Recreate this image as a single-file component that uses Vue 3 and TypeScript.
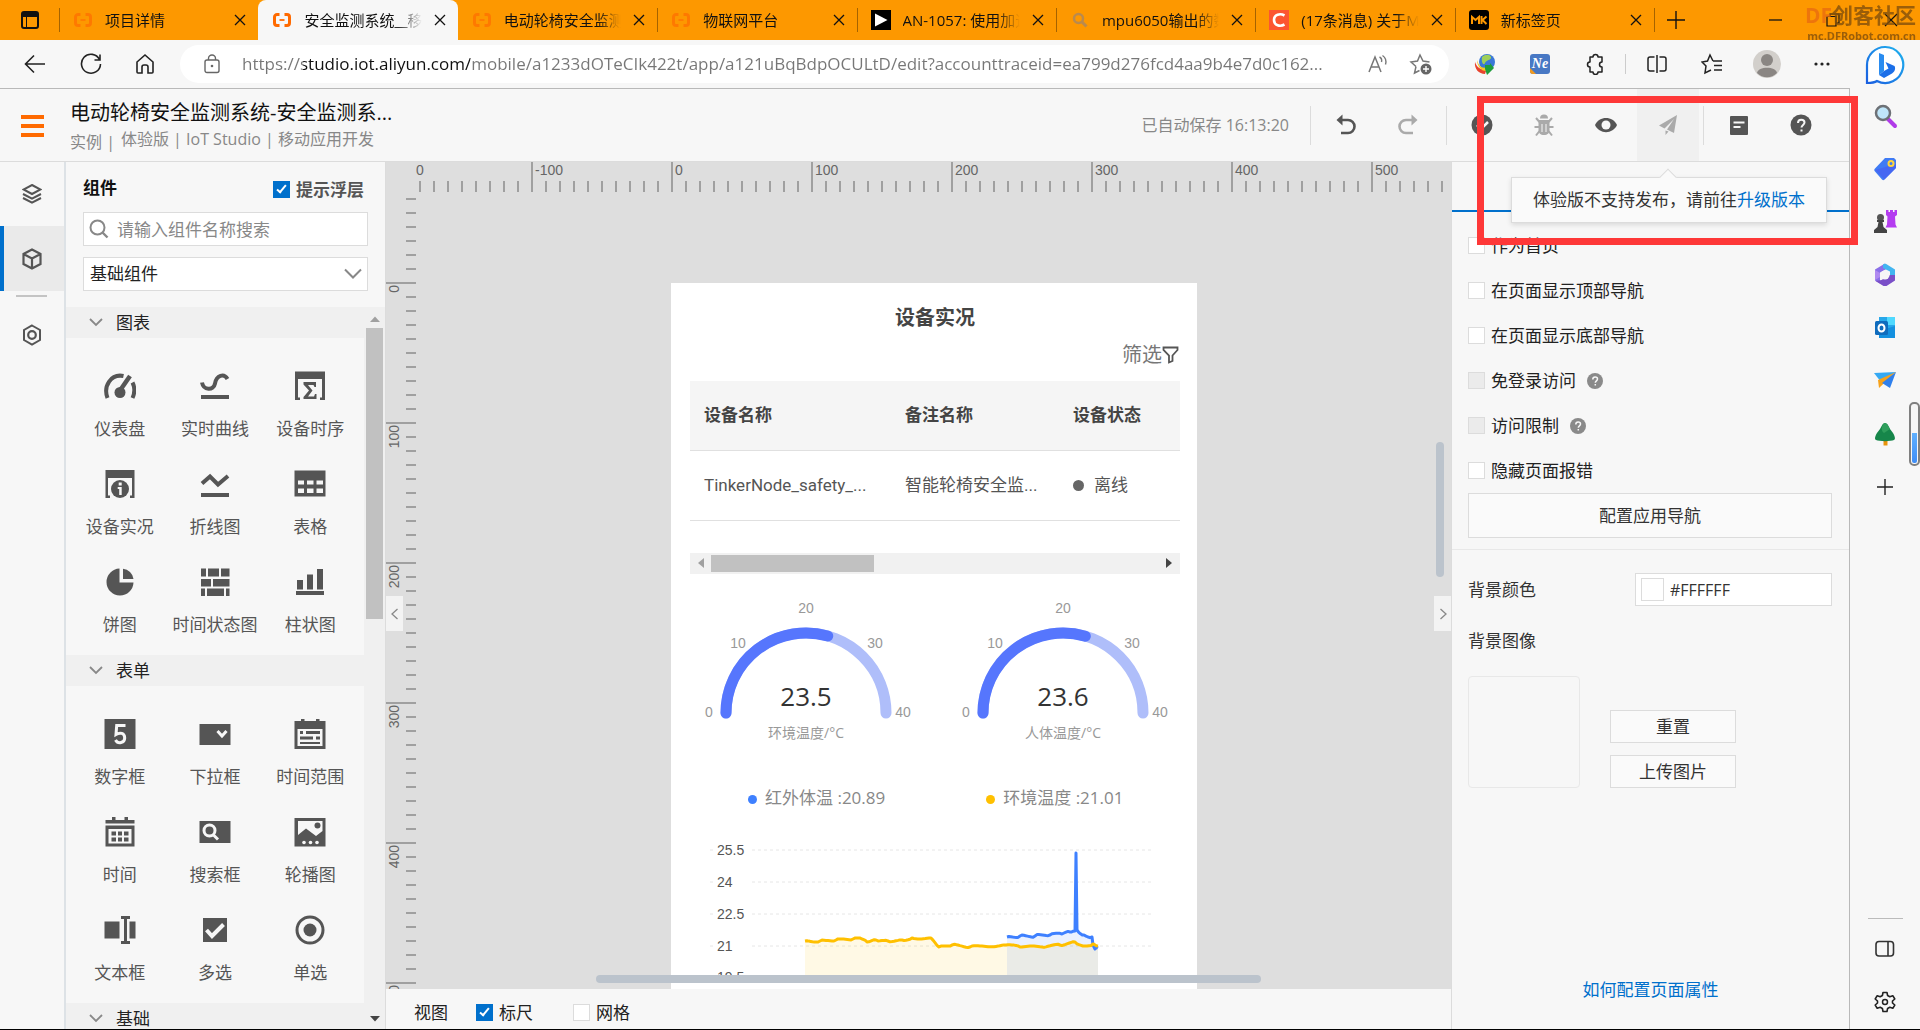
<script setup lang="ts">
import { ref } from 'vue'

interface Tab { title: string; icon: string; active?: boolean }
const tabs: Tab[] = [
  { title: '项目详情', icon: 'ali' },
  { title: '安全监测系统__移动应用', icon: 'ali', active: true },
  { title: '电动轮椅安全监测系统', icon: 'ali' },
  { title: '物联网平台', icon: 'ali' },
  { title: 'AN-1057: 使用加速度计', icon: 'play' },
  { title: 'mpu6050输出的数据', icon: 'find' },
  { title: '(17条消息) 关于MPU6050', icon: 'csdn' },
  { title: '新标签页', icon: 'mk' },
]

const favicons: Record<string, string> = {
  ali: '<path d="M7.500 4.500H5a2.500 2.500 0 0 0-2.500 2.500v6A2.500 2.500 0 0 0 5 15.500h2.500M12.500 4.500H15a2.500 2.500 0 0 1 2.500 2.500v6a2.500 2.500 0 0 1-2.500 2.500h-2.500" fill="none" stroke="#ff6a00" stroke-width="3"/><path d="M7.500 10h5" stroke="#ff6a00" stroke-width="1.800"/>',
  play: '<rect width="20" height="20" fill="#000"/><path d="M4 3.500v13L16.500 10z" fill="#fff"/>',
  find: '<circle cx="8.500" cy="8.500" r="4.500" fill="none" stroke="#b98a4e" stroke-width="2.500"/><path d="M12 12l4.500 4.500" stroke="#b98a4e" stroke-width="3"/>',
  csdn: '<rect width="20" height="20" fill="#fc5531"/><path d="M15.500 5.500C11 3 5 4.500 5 10s6 7 10.500 4.500" fill="none" stroke="#fff" stroke-width="2.600"/>',
  mk: '<rect width="20" height="20" rx="3" fill="#000"/><path d="M3 14V7l3.500 3L10 7v7M12.500 6v8M17.500 6.500l-4 3.500 4 4" fill="none" stroke="#fd9800" stroke-width="2"/>',
}

const url = 'https://studio.iot.aliyun.com/mobile/a1233dOTeCIk422t/app/a121uBqBdpOCULtD/edit?accounttraceid=ea799d276fcd4aa9b4e7d0c162...'

const keyword = ref('')
const library = ref('基础组件')
const tipLayer = ref(true)
const showRuler = ref(true)
const showGrid = ref(false)
const bgColor = ref('#FFFFFF')

interface Widget { name: string; icon: string }
const groups: { name: string; items: Widget[] }[] = [
  {
    name: '图表',
    items: [
      { name: '仪表盘', icon: '<path d="M3.500 28C-1 16 7 3.500 19.500 6M28.500 12.500c2.500 5 2.500 10 0 15.500" fill="none" stroke="#555" stroke-width="4"/><path d="M26 6L17 19" stroke="#555" stroke-width="4.500"/><circle cx="16" cy="22.500" r="5.500"/>' },
      { name: '实时曲线', icon: '<path d="M3 12.500c1.500 8 11.500 8.500 13 1C17.500 5 25 3 28.500 9" fill="none" stroke="#555" stroke-width="4"/><path d="M2 25h28v4H2z"/>' },
      { name: '设备时序', icon: '<path d="M1 1.500h30V30h-5v-2.500h2V9H4v18.500h2V30H1z"/><path d="M9.500 12H22v5h-1.500l-1-2H14l4.500 5.500-4.500 6h6l1-2.500h1.500V29h-13v-2l5.500-6.500-5.500-6z"/>' },
      { name: '设备实况', icon: '<path d="M1.500 2h29v28H26v-2.500h2V10H4v17.500h2V30H1.500z"/><circle cx="16" cy="21" r="9"/><path d="M14.700 14.500h3v3h-3zM13.700 19h4v8h-2.500v-6h-1.500z" fill="#f7f7f7"/>' },
      { name: '折线图', icon: '<path d="M3 15.500L11 8.500 19 16.500 29 8" fill="none" stroke="#555" stroke-width="4"/><path d="M2 25h28v4H2z"/>' },
      { name: '表格', icon: '<path d="M.500 2.500h31v26h-31z"/><path d="M4 12.500h6v4H4zM13 12.500h6.500v4H13zM22.500 12.500H29v4h-6.500zM4 20.500h6V25H4zM13 20.500h6.500V25H13zM22.500 20.500H29V25h-6.500z" fill="#f7f7f7"/>' },
      { name: '饼图', icon: '<path d="M15.500 2.500v14h14a13.500 13.500 0 1 1-14-14z"/><path d="M19 2.700a12 12 0 0 1 10.500 10.300H19z"/>' },
      { name: '时间状态图', icon: '<path d="M2 2.500h5v8H2zM9 2.500h11v8H9zM22 2.500h8.500v8H22zM2 13h10v7.500H2zM14 13h16.500v7.500H14zM2 22.500h4V30H2zM8 22.500h17V30H8zM27 22.500h3.500V30H27z"/>' },
      { name: '柱状图', icon: '<path d="M2 25h28v4H2zM3 14h6v9.500H3zM13 8.500h6v15h-6zM23 3h6v20.500h-6z"/>' },
    ],
  },
  {
    name: '表单',
    items: [
      { name: '数字框', icon: '<path d="M.500 1h31v30h-31z"/><path d="M21.500 7.500H12.700l-.7 9c4-2.500 8.700-1.500 8.700 3.500 0 5-6.700 6.500-9.200 2" fill="none" stroke="#f7f7f7" stroke-width="3"/>' },
      { name: '下拉框', icon: '<path d="M.500 6h31v21h-31z"/><path d="M18.500 13l4.500 5 4.500-5" fill="none" stroke="#f7f7f7" stroke-width="3"/>' },
      { name: '时间范围', icon: '<path d="M.500 3H7V1h3.500v2H22V1h3.500v2h6v28H.500zM3.500 11v17h25V11z" fill-rule="evenodd"/><path d="M6 13h3v3H6zM12 13h14v3H12zM6 18.500h13v3H6zM22 18.500h4v3h-4zM6 24h20v2H6z"/>' },
      { name: '时间', icon: '<path d="M1.500 4H8V1h3.500v3h9V1H24v3h6.500v3.500h-29zM1.500 9.500h29v21h-29zM4.500 13v14.500h23V13z" fill-rule="evenodd"/><path d="M7.500 15.500h4.500v4H7.500zM14 15.500h4v4h-4zM20 15.500h4.500v4H20zM7.500 21.500h4.500v4H7.500zM14 21.500h4v4h-4zM20 21.500h4.500v4H20z"/>' },
      { name: '搜索框', icon: '<path d="M.500 5h31v22h-31z"/><circle cx="10.500" cy="14.500" r="5.500" fill="none" stroke="#f7f7f7" stroke-width="3"/><path d="M14 18.500l5 5" stroke="#f7f7f7" stroke-width="3"/>' },
      { name: '轮播图', icon: '<path d="M.500 2h31v28.500h-31zM4 5v14l8-6.500L22 20l6.500-5V5z" fill-rule="evenodd"/><circle cx="23.500" cy="9.500" r="3"/><g fill="#f7f7f7"><circle cx="10" cy="26.500" r="1.800"/><circle cx="16.500" cy="26.500" r="1.800"/><circle cx="23" cy="26.500" r="1.800"/></g>' },
      { name: '文本框', icon: '<path d="M.500 7.500h15v17H.500zM25.500 7.500h6v17h-6zM17 2h9v3h-3v22h3v3h-9v-3h3V5h-3z"/>' },
      { name: '多选', icon: '<path d="M4 4h24v24H4z"/><path d="M7.500 16l5.500 6L24.500 10.500" fill="none" stroke="#f7f7f7" stroke-width="4"/>' },
      { name: '单选', icon: '<circle cx="16" cy="16" r="13" fill="none" stroke="#555" stroke-width="3"/><circle cx="16" cy="16" r="6.500"/>' },
    ],
  },
]

// The rulers draw one mark per 10 units; 10 units are 14px on screen.
interface Mark { pos: number; major: boolean; label: string }
function marks(zero: number, from: number, to: number): Mark[] {
  const list: Mark[] = []
  for (let v = from; v <= to; v += 10) {
    list.push({ pos: zero + v * 1.4, major: v % 100 === 0, label: String(v) })
  }
  return list
}
const hMarks = marks(256, -180, 550)
const vMarks = marks(91, -60, 560)

const gauges = [
  { value: 23.5, name: '环境温度/°C' },
  { value: 23.6, name: '人体温度/°C' },
]
const scale = [
  { t: 0, x: 12, y: 122 }, { t: 10, x: 41, y: 53 }, { t: 20, x: 109, y: 18 },
  { t: 30, x: 178, y: 53 }, { t: 40, x: 206, y: 122 },
]
function arc(v: number): string {
  const a = Math.PI * (1 - v / 40)
  return `M29 118A80 80 0 0 1 ${109 + 80 * Math.cos(a)} ${118 - 80 * Math.sin(a)}`
}

const axis = [
  { t: '25.5', y: 20 }, { t: '24', y: 52 }, { t: '22.5', y: 84 }, { t: '21', y: 116 }, { t: '19.5', y: 147 },
]
// Sensor readings jitter slightly around the sampled key points.
function line(points: number[][], noise: number): string {
  let d = `M${points[0][0]} ${points[0][1]}`
  for (let i = 1; i < points.length; i++) {
    const [x0, y0] = points[i - 1]
    const [x1, y1] = points[i]
    const steps = Math.max(1, Math.round((x1 - x0) / 2))
    for (let s = 1; s <= steps; s++) {
      const k = s / steps
      const n = s === steps ? 0 : Math.sin((i * 17 + s) * 12.9) * noise
      d += `L${(x0 + (x1 - x0) * k).toFixed(1)} ${(y0 + (y1 - y0) * k + n).toFixed(1)}`
    }
  }
  return d
}
const yellow = line([[115, 111], [130, 111], [146, 110], [163, 109], [172, 109], [177, 112], [186, 110], [198, 111], [212, 110], [222, 108], [241, 108], [249, 117], [262, 115], [280, 117], [316, 115], [330, 117], [352, 117], [370, 115], [385, 112], [395, 116], [403, 114], [408, 116]], 1)
const blue = line([[317, 107], [330, 106], [345, 106], [360, 105], [372, 104], [380, 102], [385, 101], [386, 23], [387, 100], [394, 105], [402, 107], [403, 115], [405, 119], [408, 118]], 1.3)

const pageOptions = ref([
  { text: '作为首页', on: false },
  { text: '在页面显示顶部导航', on: false },
  { text: '在页面显示底部导航', on: false },
  { text: '免登录访问', on: false, disabled: true },
  { text: '访问限制', on: false, disabled: true },
  { text: '隐藏页面报错', on: false },
])

const apps = [
  { name: '搜索', icon: '<path d="M16 16l7 7" stroke="#b03be8" stroke-width="4" stroke-linecap="round"/><circle cx="11" cy="10" r="7" fill="#bfe6fa" stroke="#6d7176" stroke-width="2.500"/>' },
  { name: '购物', icon: '<path d="M13 2h9l2 2v8L12.500 23.500c-1 1-1.500 1-2.500 0L3 15.500c-1-1-1-2 0-3z" fill="#3f7bf5"/><path d="M3 14l9.500 9.500L24 12V8z" fill="#4b53f0" opacity=".5"/><circle cx="19" cy="7.500" r="2.500" fill="#3f7bf5" stroke="#ffd43b" stroke-width="2"/>' },
  { name: '游戏', icon: '<path d="M14 1h2.500v2H18V1h3v2h1.500V1H25v5l-2 1.500.5 8 1.500 3H13.500l1.500-3 .5-8L14 6z" fill="#b43cf0"/><circle cx="8.500" cy="8.500" r="3.500" fill="#555"/><path d="M5 11h7v2h-1.500l1 5 3.500 3v3H2v-3l3.500-3 1-5H5z" fill="#444"/>' },
  { name: 'Microsoft 365', icon: '<path d="M13 1.500L3 7.500v11L8 21.500V10.500l9-5z" fill="#8a6fe8"/><path d="M11 2.500c1-1 3-1 4 0L23 7.500V16l-5-3V9.500L11 6z" fill="#42b5f0"/><path d="M23 13v5.500l-8.500 5.500h-3L3.500 19l6-1L18 13z" fill="#7a4fc8"/><path d="M3 8v10l5-3V11z" fill="#b08af0"/><circle cx="13" cy="13" r="4.500" fill="#f7f7f7"/>' },
  { name: 'Outlook', icon: '<path d="M7 2h16v18H7z" fill="#28a8ea"/><path d="M15 2h8v8h-8z" fill="#50d9ff"/><path d="M7 23V16l16-5v12z" fill="#1490df"/><rect x="3" y="6" width="13" height="14" rx="1.500" fill="#0f6cbd"/><ellipse cx="9.500" cy="13" rx="3" ry="3.500" fill="none" stroke="#fff" stroke-width="2"/>' },
  { name: '投递', icon: '<path d="M2 5l22-1L9 14z" fill="#35a9f3"/><path d="M24 4L7 20l-1-8z" fill="#f7a21b"/><path d="M24 4l-6 16-8-5z" fill="#2f80ed"/>' },
  { name: '公益', icon: '<path d="M11.500 18h4v6.500h-4z" fill="#e8940c"/><path d="M13 2c2 0 3 2 5 6 5 6 6 10 4 11-3 1.500-15 1.500-18 0-2-1-1-5 4-11 2-4 3-6 5-6z" fill="#16864a"/><path d="M13 2c2 0 3 2 5 6l-6 4C8 10 10 2 13 2z" fill="#2f9e5c"/>' },
]
</script>

<template>
  <div class="browser">
    <header class="tabbar">
      <button class="workspace" aria-label="标签页操作">
        <svg width="20" height="20" viewBox="0 0 20 20"><rect x="2" y="2" width="16" height="16" rx="2" fill="none" stroke="#111" stroke-width="2" /><path d="M2 3h16v4H2z" fill="#111" /><path d="M6.500 7v11" stroke="#111" /></svg>
      </button>
      <nav class="tabs">
        <div v-for="t in tabs" :key="t.title" class="tab" :class="{ active: t.active }">
          <svg class="favicon" :class="{ dim: t.icon === 'ali' && !t.active }" width="20" height="20" viewBox="0 0 20 20" v-html="favicons[t.icon]"></svg>
          <span class="tab-title">{{ t.title }}</span>
          <button class="tab-close" aria-label="关闭标签页">
            <svg width="12" height="12" viewBox="0 0 12 12"><path d="M1 1l10 10M11 1L1 11" stroke="#111" stroke-width="1.300" /></svg>
          </button>
        </div>
      </nav>
      <div class="window-side">
        <button class="new-tab" aria-label="新建标签页"><svg width="18" height="18" viewBox="0 0 18 18"><path d="M9 0v18M0 9h18" stroke="#111" stroke-width="1.400" /></svg></button>
        <span class="grow"></span>
        <button class="win" aria-label="最小化"><svg width="14" height="14" viewBox="0 0 14 14"><path d="M1 7h13" stroke="#111" stroke-width="1.300" /></svg></button>
        <button class="win" aria-label="还原"><svg width="14" height="14" viewBox="0 0 14 14"><path d="M1 3.500h9V13H1zM4 3.500V1h9v9h-3" fill="none" stroke="#111" stroke-width="1.200" /></svg></button>
        <button class="win" aria-label="关闭"><svg width="14" height="14" viewBox="0 0 14 14"><path d="M1 1l12 12M13 1L1 13" stroke="#111" stroke-width="1.200" /></svg></button>
      </div>
      <div class="watermark"><b><i>DF</i>创客社区</b><span>mc.DFRobot.com.cn</span></div>
    </header>

    <div class="window">
      <div class="viewport">
        <div class="toolbar">
          <div class="nav-buttons">
            <button aria-label="后退"><svg width="22" height="22" viewBox="0 0 22 22"><path d="M21 11H2M10 2.500L1.500 11l8.500 8.500" fill="none" stroke="#222" stroke-width="1.600" /></svg></button>
            <button aria-label="刷新"><svg width="22" height="22" viewBox="0 0 22 22"><path d="M19.500 6.500A9.500 9.500 0 1 0 20.500 11M20 1.500V7h-5.500" fill="none" stroke="#222" stroke-width="1.600" /></svg></button>
            <button aria-label="主页"><svg width="20" height="22" viewBox="0 0 20 22"><path d="M2 9l8-7 8 7v10a1 1 0 0 1-1 1h-4v-6a2 2 0 0 0-2-2H9a2 2 0 0 0-2 2v6H3a1 1 0 0 1-1-1z" fill="none" stroke="#222" stroke-width="1.600" /></svg></button>
          </div>
          <label class="address">
            <svg width="16" height="20" viewBox="0 0 16 20"><rect x="1" y="6" width="14" height="12.500" rx="2" fill="none" stroke="#666" stroke-width="1.400" /><path d="M4.500 6V4.500a3.500 3.500 0 0 1 7 0V6" fill="none" stroke="#666" stroke-width="1.400" /><circle cx="8" cy="12" r="1.300" fill="#666" /></svg>
            <input class="url" type="text" :value="url" aria-label="地址" readonly />
            <svg width="22" height="20" viewBox="0 0 22 20"><path d="M2 18L8 3l6 15M4 13h8" fill="none" stroke="#777" stroke-width="1.500" /><path d="M12.500 3c2 1 2.500 3 2 5M15.500 1.500c3 2 4 5.500 3 9" fill="none" stroke="#777" stroke-width="1.400" /></svg>
            <svg width="24" height="22" viewBox="0 0 24 22"><path d="M7 13.500L2 9l6.500-1L11 2l3 6 6.500 1M7 13.500L5.500 20l5-2.500" fill="none" stroke="#777" stroke-width="1.500" /><circle cx="17" cy="16" r="5.500" fill="#666" /><path d="M17 13v6M14 16h6" stroke="#fff" stroke-width="1.400" /></svg>
          </label>
          <div class="extensions">
            <button aria-label="下载扩展"><svg width="22" height="22" viewBox="0 0 22 22"><circle cx="13" cy="9" r="8" fill="#3a78d8" /><path d="M8 4c3-3 8-3 9 0s-5 3-6 6-4 0-3-6z" fill="#9fd05a" /><path d="M1 9c2 6 7 9 12 6l-2 6C5 21 0 16 1 9z" fill="#e8432e" /><path d="M3 7c2 7 6 9 10 7l-1 4C7 18 3 13 3 7z" fill="#f6c624" /><path d="M11 12h5v-2l4 5-7 7-2-6z" fill="#1f9d3c" /></svg></button>
            <button aria-label="Ne"><svg width="20" height="20" viewBox="0 0 20 20"><rect width="20" height="20" rx="3" fill="#4878c4" /><path d="M0 14l6 6H3a3 3 0 0 1-3-3z" fill="#f29a1f" /><text x="10" y="14" text-anchor="middle" font-family="Liberation Serif, serif" font-style="italic" font-weight="bold" font-size="14" fill="#fff">Ne</text></svg></button>
            <button aria-label="扩展"><svg width="22" height="22" viewBox="0 0 22 22"><path d="M6 4h3a2.500 2.500 0 0 1 5 0h4v5a2.500 2.500 0 0 0 0 5v5h-4a2.500 2.500 0 0 1-5 0H6v-5a2.500 2.500 0 0 1 0-5z" fill="none" stroke="#222" stroke-width="1.500" stroke-linejoin="round" /></svg></button>
            <span class="tool-sep"></span>
            <button aria-label="分屏"><svg width="22" height="20" viewBox="0 0 22 20"><path d="M8.500 3H4a2 2 0 0 0-2 2v10a2 2 0 0 0 2 2h4.500M13.500 3H18a2 2 0 0 1 2 2v10a2 2 0 0 1-2 2h-4.500M11 1v18" fill="none" stroke="#222" stroke-width="1.500" /></svg></button>
            <button aria-label="收藏夹"><svg width="22" height="22" viewBox="0 0 22 22"><path d="M12 8l-3-6-2.500 6L1 9l4 4-1 7 6-3M12 8h9M13 12.500h8M13 17h8" fill="none" stroke="#222" stroke-width="1.500" /></svg></button>
            <button aria-label="个人资料"><svg width="28" height="28" viewBox="0 0 28 28"><circle cx="14" cy="14" r="14" fill="#d2cfcb" /><circle cx="14" cy="10" r="6" fill="#8a8683" /><path d="M4 23c1-7 19-7 20 0a14 14 0 0 1-20 0z" fill="#8a8683" /></svg></button>
            <button aria-label="更多"><svg width="18" height="6" viewBox="0 0 18 6"><g fill="#222"><circle cx="3" cy="3" r="1.600" /><circle cx="9" cy="3" r="1.600" /><circle cx="15" cy="3" r="1.600" /></g></svg></button>
          </div>
        </div>

        <main class="studio">
          <header class="app-head">
            <button class="menu" aria-label="菜单"><i></i><i></i><i></i></button>
            <div class="heading">
              <h1>电动轮椅安全监测系统-安全监测系...</h1>
              <p><span>实例 |</span><span class="edition">体验版 | IoT Studio | 移动应用开发</span></p>
            </div>
            <span class="saved">已自动保存 16:13:20</span>
            <span class="head-sep"></span>
            <button class="act" aria-label="撤销"><svg width="24" height="24" viewBox="0 0 24 24"><path d="M7 7h7a6 6 0 0 1 0 13H7" fill="none" stroke="#555" stroke-width="2.600" /><path d="M8.500 1.500v11L2.500 7z" fill="#555" /></svg></button>
            <button class="act" aria-label="重做"><svg width="24" height="24" viewBox="0 0 24 24"><path d="M17 7h-7a6 6 0 0 0 0 13h7" fill="none" stroke="#aaa" stroke-width="2.600" /><path d="M15.500 1.500v11l6-5.500z" fill="#aaa" /></svg></button>
            <span class="head-sep"></span>
            <button class="act" aria-label="校验"><svg width="24" height="24" viewBox="0 0 24 24"><circle cx="12" cy="12" r="10.500" fill="#555" /><path d="M7 12l4 4 7-7" fill="none" stroke="#f7f7f7" stroke-width="2.500" /></svg></button>
            <button class="act" aria-label="调试"><svg width="24" height="24" viewBox="0 0 24 24"><path d="M8 5.500a4 4 0 0 1 8 0zM6.500 7h11v10c0 3.500-2 5-5.500 5s-5.500-1.500-5.500-5z" fill="#aaa" /><path d="M10 11v8M14 11v8" stroke="#f7f7f7" stroke-width="1" /><path d="M4 5l3.500 4M20 5l-3.500 4M2.500 14H7M21.500 14H17M4 22.500L7.500 18M20 22.500L16.500 18" stroke="#aaa" stroke-width="2" /></svg></button>
            <button class="act" aria-label="预览"><svg width="24" height="24" viewBox="0 0 24 24"><path d="M1 12C5 2.500 19 2.500 23 12 19 21.500 5 21.500 1 12z" fill="#555" /><circle cx="12" cy="12" r="4.500" fill="#f7f7f7" /></svg></button>
            <button class="act publish" aria-label="发布"><svg width="24" height="24" viewBox="0 0 24 24"><path d="M21 2L3 12.500l5.500 3L18 6l-7 10.500 7 3.500zM9.500 17.500V22l3-3.500z" fill="#aaa" /></svg></button>
            <span class="head-sep"></span>
            <button class="act" aria-label="文档"><svg width="24" height="24" viewBox="0 0 24 24"><rect x="3" y="3" width="18" height="19" rx="1" fill="#555" /><path d="M6.500 9.500h11M6.500 14h7" stroke="#f7f7f7" stroke-width="1.800" /></svg></button>
            <button class="act" aria-label="帮助"><svg width="24" height="24" viewBox="0 0 24 24"><circle cx="12" cy="12" r="10.500" fill="#555" /><path d="M9 10c0-4.500 6.500-4 6.500-.5 0 2.300-3 2.500-3 5M12.500 16.500v2" fill="none" stroke="#f7f7f7" stroke-width="2" /></svg></button>
          </header>

          <div class="workbench">
            <nav class="side-nav">
              <button aria-label="页面"><svg width="20" height="20" viewBox="0 0 20 20"><path d="M10 1l8.500 4.500L10 10 1.500 5.500zM1 10l9 4.700 9-4.700M1 14l9 4.700 9-4.700" fill="none" stroke="#555" stroke-width="2" /></svg></button>
              <button class="current" aria-label="组件"><svg width="20" height="22" viewBox="0 0 20 22"><path d="M10 1.500l8.500 4.500v10L10 20.500 1.500 16V6zM1.500 6L10 10.500 18.500 6M10 10.500v10" fill="none" stroke="#555" stroke-width="2.200" /></svg></button>
              <hr />
              <button class="setting" aria-label="设置"><svg width="20" height="22" viewBox="0 0 20 22"><path d="M10 1.500l8 4.500v10l-8 4.500L2 16V6z" fill="none" stroke="#555" stroke-width="2" /><circle cx="10" cy="11" r="3.800" fill="none" stroke="#555" stroke-width="2.200" /></svg></button>
            </nav>

            <aside class="library">
              <div class="library-top">
                <h2>组件</h2>
                <label class="check strong"><input v-model="tipLayer" type="checkbox" /><span>提示浮层</span></label>
              </div>
              <label class="search">
                <svg width="20" height="20" viewBox="0 0 20 20"><circle cx="8.500" cy="8.500" r="7" fill="none" stroke="#888" stroke-width="2" /><path d="M13.500 13.500l5 5" stroke="#888" stroke-width="2.400" /></svg>
                <input v-model="keyword" type="text" placeholder="请输入组件名称搜索" aria-label="请输入组件名称搜索" />
              </label>
              <div class="picker">
                <select v-model="library" aria-label="组件库"><option>基础组件</option></select>
                <svg width="18" height="12" viewBox="0 0 18 12"><path d="M1 1.500l8 8 8-8" fill="none" stroke="#888" stroke-width="2" /></svg>
              </div>
              <div class="catalog">
                <div class="catalog-list">
                  <section v-for="g in groups" :key="g.name">
                    <h3><svg width="14" height="9" viewBox="0 0 14 9"><path d="M1 1l6 6 6-6" fill="none" stroke="#888" stroke-width="1.800" /></svg>{{ g.name }}</h3>
                    <div class="widgets">
                      <button v-for="w in g.items" :key="w.name" class="widget">
                        <svg width="32" height="32" viewBox="0 0 32 32" fill="#555" v-html="w.icon"></svg>
                        <span>{{ w.name }}</span>
                      </button>
                    </div>
                  </section>
                  <h3><svg width="14" height="9" viewBox="0 0 14 9"><path d="M1 1l6 6 6-6" fill="none" stroke="#888" stroke-width="1.800" /></svg>基础</h3>
                </div>
                <div class="catalog-scroll">
                  <svg width="10" height="6" viewBox="0 0 10 6"><path d="M0 6l5-5.500L10 6z" fill="#a0a0a0" /></svg>
                  <i></i>
                  <svg width="10" height="6" viewBox="0 0 10 6"><path d="M0 0l5 5.500L10 0z" fill="#444" /></svg>
                </div>
              </div>
            </aside>

            <section class="editor">
              <div class="board">
                <span class="corner"></span>
                <svg class="ruler-h">
                  <text x="0" y="13" text-anchor="start">0</text>
                  <g v-for="m in hMarks" :key="m.pos">
                    <rect :x="m.pos - 1" :y="m.major ? 0 : 19" width="2" :height="m.major ? 30 : 11" />
                    <text v-if="m.major" :x="m.pos + 3" y="13">{{ m.label }}</text>
                  </g>
                </svg>
                <svg class="ruler-v">
                  <g v-for="m in vMarks" :key="m.pos">
                    <rect :y="m.pos - 1" :x="m.major ? 0 : 20" height="2" :width="m.major ? 30 : 10" />
                    <text v-if="m.major" text-anchor="end" :transform="`translate(13 ${m.pos + 2}) rotate(-90)`">{{ m.label }}</text>
                  </g>
                </svg>
                <div class="stage">
                  <article class="phone">
                    <h4>设备实况</h4>
                    <button class="filter">筛选<svg width="17" height="18" viewBox="0 0 17 18"><path d="M1.500 1.500h14V4L10.500 9.500V15l-3.500 1.500v-7L1.500 4z" fill="none" stroke="#555" stroke-width="1.800" /></svg></button>
                    <table>
                      <thead><tr><th>设备名称</th><th>备注名称</th><th>设备状态</th></tr></thead>
                      <tbody><tr><td>TinkerNode_safety_...</td><td>智能轮椅安全监...</td><td><i class="off"></i>离线</td></tr></tbody>
                    </table>
                    <div class="table-scroll">
                      <svg width="6" height="10" viewBox="0 0 6 10"><path d="M6 0v10L0 5z" fill="#a0a0a0" /></svg>
                      <i></i>
                      <svg width="6" height="10" viewBox="0 0 6 10"><path d="M0 0v10l6-5z" fill="#444" /></svg>
                    </div>
                    <div class="gauges">
                      <svg v-for="g in gauges" :key="g.name" width="218" height="160" viewBox="0 0 218 160">
                        <path :d="arc(40)" class="arc-rest" />
                        <path :d="arc(g.value)" class="arc-value" />
                        <text v-for="s in scale" :key="s.t" :x="s.x" :y="s.y" class="gauge-tick">{{ s.t }}</text>
                        <text x="109" y="111" class="gauge-num">{{ g.value }}</text>
                        <text x="109" y="143" class="gauge-name">{{ g.name }}</text>
                      </svg>
                    </div>
                    <div class="legend">
                      <span><i class="b"></i>红外体温 :20.89</span>
                      <span><i class="y"></i>环境温度 :21.01</span>
                    </div>
                    <svg class="chart" width="490" height="149" viewBox="0 0 490 149">
                      <g v-for="a in axis" :key="a.t">
                        <path :d="`M20 ${a.y}H462`" stroke="#e6e6e6" stroke-width="1" stroke-dasharray="3 3" />
                        <rect x="26" :y="a.y - 6" width="34" height="12" fill="#fff" />
                        <text x="27" :y="a.y + 5">{{ a.t }}</text>
                      </g>
                      <path :d="`${yellow}V149H115z`" fill="#ffc000" opacity=".1" />
                      <path :d="`${blue}V149H317z`" fill="#3e80ff" opacity=".11" />
                      <path :d="blue" fill="none" stroke="#3e80ff" stroke-width="3" stroke-linejoin="round" />
                      <path :d="yellow" fill="none" stroke="#ffc000" stroke-width="3" stroke-linejoin="round" />
                    </svg>
                  </article>
                </div>
                <i class="bar-v"></i>
                <i class="bar-h"></i>
                <button class="fold fold-left" aria-label="收起左侧"><svg width="8" height="12" viewBox="0 0 8 12"><path d="M6.500 1L1 6l5.500 5" fill="none" stroke="#888" stroke-width="1.300" /></svg></button>
                <button class="fold fold-right" aria-label="收起右侧"><svg width="8" height="12" viewBox="0 0 8 12"><path d="M1.500 1L7 6l-5.500 5" fill="none" stroke="#888" stroke-width="1.300" /></svg></button>
              </div>
              <footer class="view-bar">
                <span>视图</span>
                <label class="check"><input v-model="showRuler" type="checkbox" /><span>标尺</span></label>
                <label class="check grid-check"><input v-model="showGrid" type="checkbox" /><span>网格</span></label>
              </footer>
            </section>

            <aside class="props">
              <div class="props-tab"></div>
              <div class="props-body">
                <div v-for="o in pageOptions" :key="o.text" class="option">
                  <label class="check"><input v-model="o.on" type="checkbox" :disabled="o.disabled" /><span>{{ o.text }}</span></label>
                  <svg v-if="o.disabled" width="16" height="16" viewBox="0 0 16 16"><circle cx="8" cy="8" r="8" fill="#8a8a8a" /><path d="M5.800 6.500c0-3.400 4.700-3 4.700-.4 0 1.700-2.200 1.800-2.200 3.600M8.300 11v1.600" fill="none" stroke="#f7f7f7" stroke-width="1.500" /></svg>
                </div>
                <button class="plain wide">配置应用导航</button>
              </div>
              <div class="props-body background">
                <div class="field">
                  <label for="bg-color">背景颜色</label>
                  <div class="color"><i></i><input id="bg-color" v-model="bgColor" type="text" /></div>
                </div>
                <p class="field-name">背景图像</p>
                <div class="image-field">
                  <div class="thumb"></div>
                  <div class="image-actions">
                    <button class="plain">重置</button>
                    <button class="plain">上传图片</button>
                  </div>
                </div>
              </div>
              <a class="help" href="#">如何配置页面属性</a>
            </aside>
          </div>
          <div class="tip">体验版不支持发布，请前往<a href="#">升级版本</a></div>
          <div class="highlight"></div>
        </main>
      </div>

      <aside class="edge-bar">
        <button aria-label="Bing" class="bing"><svg width="40" height="40" viewBox="0 0 40 40"><defs><linearGradient id="bing-ring" x1="0" y1="1" x2="1" y2="0"><stop offset="0" stop-color="#1a5fe0" /><stop offset="1" stop-color="#1fb2ee" /></linearGradient></defs><path d="M20 2a18 18 0 1 1-8 34c-3 2-6 2-10 2V20A18 18 0 0 1 20 2z" fill="#fff" stroke="url(#bing-ring)" stroke-width="2.200" /><path d="M14 8l5 2v16l-5 4z" fill="#2a8cf0" /><path d="M14 30l5-4 4.500-2.500-3-6.500 9 4c1.500 3 0 6-2.500 7.500L19 33z" fill="#1c6fe8" /></svg></button>
        <button v-for="a in apps" :key="a.name" :aria-label="a.name"><svg width="26" height="26" viewBox="0 0 26 26" v-html="a.icon"></svg></button>
        <button aria-label="添加"><svg width="16" height="16" viewBox="0 0 16 16"><path d="M8 0v16M0 8h16" stroke="#222" stroke-width="1.400" /></svg></button>
        <span class="grow"></span>
        <hr />
        <button aria-label="边栏"><svg width="20" height="18" viewBox="0 0 20 18"><rect x="1" y="1.500" width="17.500" height="14.500" rx="3" fill="none" stroke="#333" stroke-width="1.600" /><path d="M13 1.500V16" stroke="#333" stroke-width="1.600" /></svg></button>
        <button aria-label="设置"><svg width="22" height="22" viewBox="0 0 22 22"><path d="M9 1.500h4l.6 3 2.200 1.200 3-1 2 3.300L18.500 10v2l2.300 2-2 3.300-3-1-2.200 1.200-.6 3H9l-.6-3-2.200-1.200-3 1-2-3.300L3.500 12v-2L1.200 8l2-3.300 3 1 2.200-1.200z" fill="none" stroke="#222" stroke-width="1.600" stroke-linejoin="round" /><circle cx="11" cy="11" r="2.500" fill="none" stroke="#222" stroke-width="1.500" /></svg></button>
        <i class="level"></i>
      </aside>
    </div>
  </div>
</template>

<style>
body {
  margin: 0;
  overflow: hidden;
}
</style>

<style scoped>
.browser {
  display: flex;
  flex-direction: column;
  height: 100vh;
  box-sizing: border-box;
  overflow: hidden;
  border-bottom: 1px solid #000;
  background: #f7f7f7;
  color: #333;
  font: 17px/24px "Open Sans", "Noto Sans CJK SC", sans-serif;
}
.browser *,
.browser *::before {
  box-sizing: border-box;
}
button {
  padding: 0;
  border: 0;
  background: none;
  color: inherit;
  font: inherit;
}
svg {
  flex: none;
  display: block;
}
h1, h2, h3, h4, p {
  margin: 0;
  font-weight: 400;
}
a {
  color: #0070cc;
  text-decoration: none;
}
.grow {
  flex: 1;
}

/* tab strip */
.tabbar {
  position: relative;
  display: flex;
  flex: none;
  height: 40px;
  background: #fd9800;
  color: #111;
  font-size: 15px;
}
.workspace {
  display: flex;
  flex: none;
  align-items: center;
  width: 59px;
  padding-left: 20px;
}
.tabs {
  display: flex;
  flex: 1;
  min-width: 0;
}
.tab {
  position: relative;
  display: flex;
  flex: 1;
  align-items: center;
  min-width: 0;
  padding: 0 12px 0 14px;
}
.tab::before {
  content: "";
  position: absolute;
  left: 0;
  top: 8px;
  width: 1px;
  height: 24px;
  background: #a56300;
}
.tab.active {
  border-radius: 8px 8px 0 0;
  background: #f7f7f7;
}
.tab.active::before,
.tab.active + .tab::before {
  display: none;
}
.favicon.dim {
  opacity: 0.65;
}
.tab-title {
  flex: 1;
  overflow: hidden;
  margin: 0 12px;
  white-space: nowrap;
  -webkit-mask-image: linear-gradient(90deg, #000 80%, transparent);
  mask-image: linear-gradient(90deg, #000 80%, transparent);
}
.window-side {
  position: relative;
  display: flex;
  flex: none;
  align-items: center;
  width: 266px;
}
.window-side::before {
  content: "";
  width: 1px;
  height: 24px;
  background: #a56300;
}
.new-tab {
  padding-left: 12px;
}
.win {
  display: flex;
  justify-content: center;
  width: 58px;
}
.watermark {
  position: absolute;
  top: 3px;
  right: 4px;
  display: flex;
  flex-direction: column;
  align-items: flex-end;
  color: #83500c;
  opacity: 0.8;
  pointer-events: none;
}
.watermark b {
  font-size: 21px;
}
.watermark i {
  color: #ea6d10;
  font-style: normal;
}
.watermark span {
  font-size: 11px;
  font-weight: 700;
  line-height: 18px;
}

/* browser frame */
.window {
  display: flex;
  flex: 1;
  min-height: 0;
}
.viewport {
  display: flex;
  flex: 1;
  flex-direction: column;
  min-width: 0;
}
.toolbar {
  display: flex;
  flex: none;
  align-items: center;
  height: 48px;
}
.nav-buttons {
  display: flex;
  justify-content: space-between;
  width: 131px;
  margin-left: 24px;
}
.address {
  display: flex;
  flex: 1;
  align-items: center;
  gap: 20px;
  height: 38px;
  margin-left: 25px;
  padding: 0 16px 0 24px;
  border-radius: 19px;
  background: #fff;
}
.url {
  flex: 1;
  min-width: 0;
  margin-left: 2px;
  padding: 0;
  border: 0;
  outline: 0;
  font: 17px/24px "Open Sans", sans-serif;
  color: transparent;
  background: linear-gradient(90deg, #767676 61px, #111 61px, #111 228px, #767676 228px);
  -webkit-background-clip: text;
  background-clip: text;
}
.extensions {
  display: flex;
  flex: none;
  align-items: center;
  margin: 0 1px 0 8px;
}
.extensions button {
  display: flex;
  justify-content: center;
  width: 55px;
}
.tool-sep {
  width: 1px;
  height: 20px;
  margin: 0 3px;
  background: #ccc;
}

/* studio header */
.studio {
  position: relative;
  display: flex;
  flex: 1;
  flex-direction: column;
  min-height: 0;
  border-top: 1px solid #b9b9b9;
  border-right: 1px solid #b9b9b9;
}
.app-head {
  display: flex;
  flex: none;
  align-items: center;
  height: 73px;
  padding-right: 17px;
  border-bottom: 1px solid #dcdcdc;
}
.menu {
  display: flex;
  flex-direction: column;
  gap: 4px;
  width: 23px;
  margin: 2px 26px 0 21px;
}
.menu i {
  height: 4px;
  background: #ff6a00;
}
.menu i + i {
  margin-top: 1px;
}
.heading {
  flex: 1;
  min-width: 0;
  padding-top: 2px;
  white-space: nowrap;
}
.heading h1 {
  color: #111;
  font-size: 20px;
  line-height: 28px;
}
.heading p {
  display: flex;
  gap: 6px;
  color: #888;
  font-size: 16px;
}
.heading p span:first-child {
  padding-top: 3px;
}
.saved {
  margin-right: 21px;
  color: #888;
  font-size: 16px;
}
.head-sep {
  width: 1px;
  height: 39px;
  background: #dcdcdc;
}
.act + .head-sep {
  margin-left: 7px;
}
.app-head .head-sep:last-of-type {
  margin: 0 4px;
}
.act {
  display: flex;
  align-items: center;
  justify-content: center;
  width: 62px;
  height: 72px;
}
.head-sep + .act {
  margin-left: 4px;
}
.publish {
  background: #f0f0f0;
}
.publish + .head-sep + .act {
  margin-left: 0;
}

/* left navigation */
.workbench {
  display: flex;
  flex: 1;
  min-height: 0;
}
.side-nav {
  display: flex;
  flex: none;
  flex-direction: column;
  width: 66px;
  border-right: 2px solid #dde2e6;
}
.side-nav button {
  display: flex;
  align-items: center;
  justify-content: center;
  height: 65px;
}
.side-nav button:first-child {
  height: 64px;
}
.side-nav .current {
  padding-right: 4px;
  border-left: 4px solid #0070cc;
  background: #eaeaea;
}
.side-nav hr {
  width: 31px;
  margin: 4px 16px 5px;
  border: 0;
  border-top: 2px solid #c4c4c4;
}

/* component library */
.library {
  display: flex;
  flex: none;
  flex-direction: column;
  width: 319px;
}
.library-top {
  display: flex;
  align-items: center;
  justify-content: space-between;
  height: 50px;
  padding: 2px 21px 0 17px;
}
.library-top h2 {
  color: #111;
  font-size: 17px;
  font-weight: 700;
}
.check {
  display: flex;
  align-items: center;
  gap: 6px;
  color: #222;
}
.check.strong {
  padding-top: 3px;
  color: #555;
  font-weight: 700;
}
.check input {
  position: relative;
  width: 17px;
  height: 17px;
  margin: 0;
  appearance: none;
  border: 1px solid #dcdcdc;
  background: #fff;
}
.check input:checked {
  border-color: #0070cc;
  background: #0070cc;
}
.check input:checked::before {
  content: "";
  position: absolute;
  left: 5px;
  top: 1px;
  width: 5px;
  height: 10px;
  border: solid #fff;
  border-width: 0 2px 2px 0;
  transform: rotate(40deg);
}
.check input:disabled {
  background: #ebebeb;
}
.search,
.picker {
  display: flex;
  align-items: center;
  height: 34px;
  margin: 0 17px 11px;
  border: 1px solid #dcdcdc;
  background: #fff;
}
.search {
  padding-left: 5px;
}
.search input {
  flex: 1;
  min-width: 0;
  margin-left: 8px;
  padding: 1px 0 0;
  border: 0;
  outline: 0;
  background: none;
  color: #333;
  font: inherit;
}
.search input::placeholder {
  color: #888;
}
.picker {
  padding: 0 5px 0 6px;
}
.picker select {
  flex: 1;
  padding: 0;
  border: 0;
  appearance: none;
  background: none;
  color: #222;
  font: inherit;
}
.catalog {
  display: flex;
  flex: 1;
  min-height: 0;
  margin-top: 5px;
}
.catalog-list {
  flex: 1;
  overflow: hidden;
}
.catalog h3 {
  display: flex;
  align-items: center;
  gap: 13px;
  height: 31px;
  padding-left: 23px;
  background: #f0f0f0;
  color: #222;
  font-size: 17px;
}
.widgets {
  display: grid;
  grid-template-columns: repeat(3, 1fr);
  grid-auto-rows: 98px;
  height: 317px;
  padding: 13px 6px 0;
}
.widget {
  display: flex;
  flex-direction: column;
  align-items: center;
  gap: 15px;
  padding-top: 19px;
  color: #555;
  white-space: nowrap;
}
.catalog-scroll {
  display: flex;
  flex-direction: column;
  align-items: center;
  justify-content: space-between;
  width: 21px;
  padding: 9px 0 7px;
  background: #f0f0f0;
}
.catalog-scroll i {
  width: 17px;
  height: 291px;
  margin: 6px 0 auto;
  background: #c1c1c1;
}

/* canvas */
.editor {
  display: flex;
  flex: 1;
  flex-direction: column;
  min-width: 0;
  border-left: 1px solid #dcdcdc;
}
.board {
  position: relative;
  display: grid;
  flex: 1;
  grid-template: 30px minmax(0, 1fr) / 30px minmax(0, 1fr);
  min-height: 0;
  background: #dedede;
}
.ruler-h,
.ruler-v {
  width: 100%;
  height: 100%;
  overflow: hidden;
  fill: #a0a0a0;
  font: 14px "Liberation Sans", sans-serif;
}
.ruler-h text,
.ruler-v text {
  fill: #666;
}
.stage {
  overflow: hidden;
  padding-left: 1px;
}
.phone {
  width: 526px;
  height: 100%;
  margin: 91px auto 0;
  padding: 0 17px 0 19px;
  background: #fff;
}
.phone h4 {
  padding-top: 21px;
  color: #444;
  font-size: 20px;
  font-weight: 700;
  line-height: 28px;
  text-align: center;
}
.filter {
  display: flex;
  align-items: center;
  margin: 10px 1px 0 auto;
  color: #777;
  font-size: 20px;
  line-height: 26px;
}
.phone table {
  width: 100%;
  margin-top: 13px;
  border-collapse: collapse;
  table-layout: fixed;
  color: #555;
  font-family: Roboto, "Noto Sans CJK SC", sans-serif;
}
.phone th,
.phone td {
  height: 70px;
  padding: 0 0 0 14px;
  border-bottom: 1px solid #e0e0e0;
  text-align: left;
  white-space: nowrap;
}
.phone th {
  width: 201px;
  height: 69px;
  background: #f5f5f5;
  color: #444;
  font-weight: 700;
}
.phone th:nth-child(2) {
  width: 168px;
}
.phone th:last-child {
  width: auto;
}
.off {
  display: inline-block;
  width: 11px;
  height: 11px;
  margin-right: 10px;
  border-radius: 50%;
  background: #666;
}
.table-scroll {
  display: flex;
  align-items: center;
  justify-content: space-between;
  height: 21px;
  margin-top: 32px;
  padding: 0 8px;
  background: #f1f1f1;
}
.table-scroll i {
  width: 163px;
  height: 17px;
  margin: 0 auto 0 7px;
  background: #c1c1c1;
}
.gauges {
  display: flex;
  gap: 39px;
  margin: 21px 7px 0;
}
.arc-rest,
.arc-value {
  fill: none;
  stroke: #afbefa;
  stroke-width: 11;
  stroke-linecap: round;
}
.arc-value {
  stroke: #5676fd;
}
.gauges text {
  text-anchor: middle;
  fill: #999;
}
.gauge-tick {
  font: 14px "Liberation Sans", sans-serif;
}
.gauges .gauge-num {
  fill: #333;
  font: 26px "Open Sans", sans-serif;
}
.gauge-name {
  font-size: 14px;
}
.legend {
  display: flex;
  gap: 101px;
  margin: 31px 0 0 58px;
  color: #888;
  white-space: nowrap;
}
.legend i {
  display: inline-block;
  width: 9px;
  height: 9px;
  margin-right: 8px;
  border-radius: 50%;
}
.legend .b {
  background: #3e80ff;
}
.legend .y {
  background: #ffc000;
}
.chart {
  margin-top: 20px;
}
.chart text {
  fill: #555;
  font: 14px "Liberation Sans", sans-serif;
}
.bar-v,
.bar-h {
  position: absolute;
  border-radius: 4px;
  background: #bbc3cc;
}
.bar-v {
  top: 280px;
  right: 7px;
  width: 8px;
  height: 135px;
}
.bar-h {
  left: 210px;
  bottom: 6px;
  width: 665px;
  height: 8px;
}
.fold {
  position: absolute;
  top: 434px;
  display: flex;
  align-items: center;
  justify-content: center;
  width: 17px;
  height: 35px;
  background: #f3f3f3;
}
.fold-left {
  left: 0;
}
.fold-right {
  right: 0;
}
.view-bar {
  display: flex;
  flex: none;
  align-items: center;
  height: 40px;
  padding: 7px 0 0 28px;
  color: #222;
}
.view-bar .check {
  margin-left: 28px;
}
.view-bar .grid-check {
  margin-left: 40px;
}

/* properties */
.props {
  display: flex;
  flex: none;
  flex-direction: column;
  width: 398px;
  border-left: 1px solid #dcdcdc;
}
.props-tab {
  flex: none;
  height: 50px;
  border-bottom: 2px solid #0070cc;
}
.props-body {
  padding: 11px 17px 11px 16px;
  border-bottom: 1px solid #e8e8e8;
}
.props-body.background {
  border-bottom: 0;
}
.option {
  display: flex;
  align-items: center;
  gap: 11px;
  height: 45px;
}
.plain {
  width: 126px;
  height: 33px;
  border: 1px solid #dcdcdc;
  background: #fafafa;
  color: #333;
}
.plain.wide {
  display: block;
  width: 100%;
  height: 45px;
}
.field {
  display: flex;
  align-items: center;
  justify-content: space-between;
  margin-top: 12px;
}
.color {
  display: flex;
  align-items: center;
  gap: 6px;
  width: 197px;
  height: 33px;
  padding: 0 5px;
  border: 1px solid #dcdcdc;
  background: #fff;
}
.color i {
  flex: none;
  width: 23px;
  height: 23px;
  border: 1px solid #dcdcdc;
}
.color input {
  flex: 1;
  min-width: 0;
  padding: 0;
  border: 0;
  outline: 0;
  color: #333;
  font: 16px "Open Sans", sans-serif;
}
.field-name {
  margin-top: 23px;
}
.image-field {
  display: flex;
  align-items: flex-end;
  gap: 30px;
  margin-top: 23px;
}
.thumb {
  width: 112px;
  height: 112px;
  border: 1px solid #e8e8e8;
  border-radius: 4px;
}
.image-actions {
  display: flex;
  flex-direction: column;
  gap: 12px;
}
.help {
  margin: auto auto 27px;
}

/* floating layers */
.tip {
  position: absolute;
  top: 88px;
  right: 22px;
  width: 316px;
  height: 46px;
  border: 1px solid #dcdcdc;
  background: #fafafa;
  box-shadow: 0 2px 5px rgba(0, 0, 0, 0.12);
  line-height: 44px;
  text-align: center;
  white-space: nowrap;
}
.tip::before {
  content: "";
  position: absolute;
  left: 150px;
  top: -7px;
  width: 12px;
  height: 12px;
  border: solid #dcdcdc;
  border-width: 1px 0 0 1px;
  background: #fafafa;
  transform: rotate(45deg);
}
.highlight {
  position: absolute;
  top: 7px;
  right: -9px;
  width: 381px;
  height: 149px;
  border: 7px solid #fe3838;
  pointer-events: none;
}

/* edge sidebar */
.edge-bar {
  position: relative;
  display: flex;
  flex: none;
  flex-direction: column;
  align-items: center;
  width: 70px;
  padding-bottom: 1px;
}
.edge-bar button {
  display: flex;
  align-items: center;
  justify-content: center;
  height: 53px;
}
.edge-bar .bing {
  height: 49px;
}
.edge-bar hr {
  width: 35px;
  margin: 0 0 3px;
  border: 0;
  border-top: 1px solid #bbb;
}
.level {
  position: absolute;
  top: 362px;
  right: 0;
  width: 11px;
  height: 64px;
  padding: 1px;
  border: 2px solid #808080;
  border-radius: 5px;
  background: linear-gradient(#f7f7f7 48%, #5fb0ff 49%, #3e8cf5);
  background-clip: content-box;
}
</style>
